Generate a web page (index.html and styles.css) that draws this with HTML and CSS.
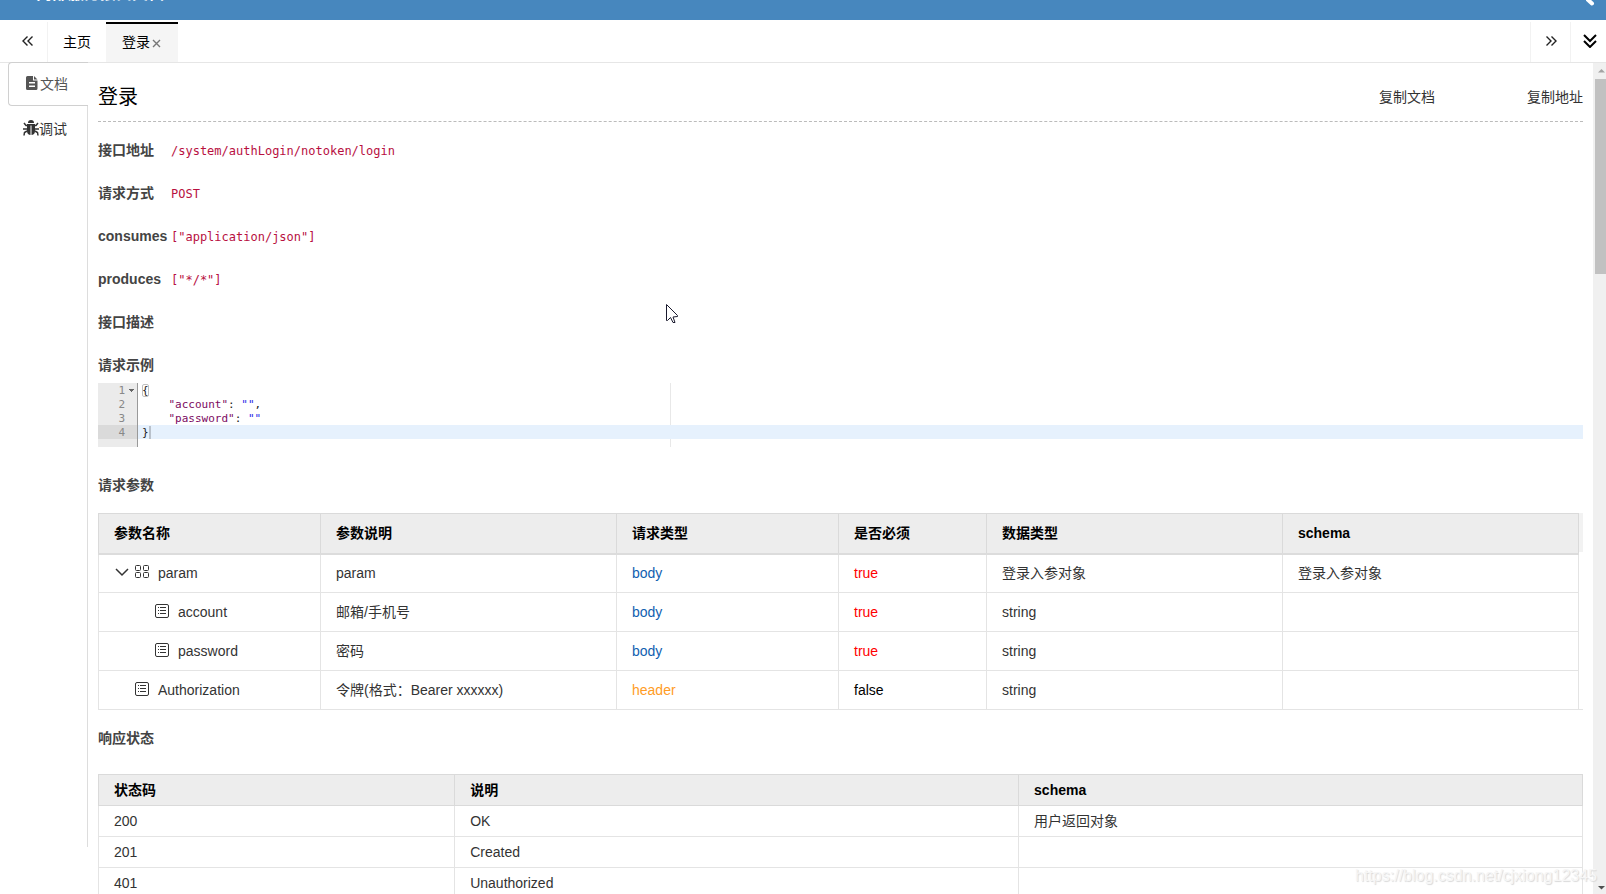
FILE: index.html
```html
<!DOCTYPE html>
<html lang="zh-CN">
<head>
<meta charset="utf-8">
<title>登录</title>
<link rel="stylesheet" href="styles.css">
</head>
<body>
<svg class="defs" aria-hidden="true">
  <symbol id="list" viewBox="0 0 14 14"><rect x="0.5" y="0.5" width="13" height="13" rx="1.5" fill="none" stroke="currentColor"/><path d="M3 3.5h1M5 3.5h6M3 6.5h1M5 6.5h6M3 9.500h1M5 9.500h6" stroke="currentColor" fill="none"/></symbol>
</svg>
<header class="topbar">
  <span class="brand">内部服务接口文档</span>
  <svg class="corner" width="10" height="6" viewBox="0 0 10 6"><path d="M0-2L6 3.500" stroke="#fff" stroke-width="4" stroke-linecap="round"/></svg>
</header>
<nav class="tabs">
  <button class="roll prev" aria-label="向左"><svg width="12" height="12" viewBox="0 0 12 12"><path d="M5.500 1.500L1 6l4.500 4.500M10.500 1.500L6 6l4.500 4.500"/></svg></button>
  <button class="tab">主页</button>
  <button class="tab active">登录<svg class="close" width="9" height="9" viewBox="0 0 9 9"><path d="M1 1l7 7M8 1L1 8"/></svg></button>
  <button class="roll next" aria-label="向右"><svg width="12" height="12" viewBox="0 0 12 12"><path d="M1.500 1.500L6 6l-4.500 4.500M6.500 1.500L11 6l-4.500 4.500"/></svg></button>
  <button class="roll more" aria-label="更多"><svg width="14" height="14" viewBox="0 0 14 14"><path d="M1 1l6 6 6-6M1 7l6 6 6-6"/></svg></button>
</nav>
<div class="body">
  <aside class="side">
    <button class="side-tab active"><svg width="12" height="14" viewBox="0 0 12 14"><path fill="currentColor" fill-rule="evenodd" d="M1.500 0H7v4.500h4.500v8q0 1.500-1.500 1.500h-8.500Q0 14 0 12.500v-11Q0 0 1.500 0zM8 0l3.500 3.500H8zM3 6v1.500h6V6zM3 9.500v1.500h6V9.500z"/></svg>文档</button>
    <button class="side-tab"><svg width="16" height="16" viewBox="0 0 16 16"><path fill="currentColor" d="M5 3a3 3 0 0 1 6 0zM4 4h8v7q0 4-4 4t-4-4z"/><path d="M1 3l2 2.500h10L15 3M0 9h16M4 11l-2.500 1.500L1 15.500M12 11l2.500 1.500.5 3" fill="none" stroke="currentColor" stroke-width="1.500"/><path d="M8 5.500V15" stroke="#fff"/></svg>调试</button>
  </aside>
  <main class="content">
    <div class="title-row">
      <h1>登录</h1>
      <button class="copy">复制文档</button>
      <button class="copy">复制地址</button>
    </div>
    <dl class="info">
      <dt>接口地址</dt><dd>/system/authLogin/notoken/login</dd>
      <dt>请求方式</dt><dd>POST</dd>
      <dt>consumes</dt><dd>["application/json"]</dd>
      <dt>produces</dt><dd>["*/*"]</dd>
      <dt>接口描述</dt><dd></dd>
    </dl>
    <h2 class="example-title">请求示例</h2>
    <div class="editor">
      <div class="line"><span class="no fold">1</span><code><span class="bracket">{</span></code></div>
      <div class="line"><span class="no">2</span><code>    <span class="key">"account"</span>: <span class="str">""</span>,</code></div>
      <div class="line"><span class="no">3</span><code>    <span class="key">"password"</span>: <span class="str">""</span></code></div>
      <div class="line current"><span class="no">4</span><code>}<span class="caret"></span></code></div>
      <div class="line rest"><span class="no"></span></div>
    </div>
    <h2 class="params-title">请求参数</h2>
    <div class="params-box">
      <table class="params">
        <colgroup><col class="w15"><col class="w20"><col class="w15"><col class="w10"><col class="w20"><col class="w20"></colgroup>
        <thead><tr><th>参数名称</th><th>参数说明</th><th>请求类型</th><th>是否必须</th><th>数据类型</th><th>schema</th></tr></thead>
        <tbody>
          <tr><td><span class="name"><svg class="chevron" width="14" height="14" viewBox="0 0 14 14"><path d="M1 4l6 6 6-6"/></svg><svg width="14" height="14" viewBox="0 0 14 14" fill="none" stroke="currentColor"><rect x="0.500" y="0.500" width="5" height="5" rx="1"/><rect x="8.500" y="0.500" width="5" height="5" rx="1"/><rect x="0.500" y="7.500" width="5" height="5" rx="1"/><rect x="8.500" y="7.500" width="5" height="5" rx="1"/></svg><span class="label">param</span></span></td><td>param</td><td class="blue">body</td><td class="red">true</td><td>登录入参对象</td><td>登录入参对象</td></tr>
          <tr><td><span class="name child"><svg width="14" height="14"><use href="#list"/></svg><span class="label">account</span></span></td><td>邮箱/手机号</td><td class="blue">body</td><td class="red">true</td><td>string</td><td></td></tr>
          <tr><td><span class="name child"><svg width="14" height="14"><use href="#list"/></svg><span class="label">password</span></span></td><td>密码</td><td class="blue">body</td><td class="red">true</td><td>string</td><td></td></tr>
          <tr><td><span class="name leaf"><svg width="14" height="14"><use href="#list"/></svg><span class="label">Authorization</span></span></td><td>令牌(格式：Bearer xxxxxx)</td><td class="orange">header</td><td class="black">false</td><td>string</td><td></td></tr>
        </tbody>
      </table>
    </div>
    <h2 class="status-title">响应状态</h2>
    <table class="status">
      <colgroup><col class="w24"><col class="w38"><col class="w38"></colgroup>
      <thead><tr><th>状态码</th><th>说明</th><th>schema</th></tr></thead>
      <tbody>
        <tr><td>200</td><td>OK</td><td>用户返回对象</td></tr>
        <tr><td>201</td><td>Created</td><td></td></tr>
        <tr><td>401</td><td>Unauthorized</td><td></td></tr>
      </tbody>
    </table>
  </main>
  <div class="scrollbar">
    <svg width="9" height="16" viewBox="0 0 9 16"><path d="M1 9.500L4.500 6 8 9.500z" fill="#a3a3a3"/></svg>
    <span class="thumb"></span>
    <svg class="down" width="9" height="16" viewBox="0 0 9 16"><path d="M1 8L4.500 11.500 8 8z" fill="#505050"/></svg>
  </div>
</div>
<svg class="pointer" width="13" height="20" viewBox="0 0 13 20"><path d="M.5.5v16h1l3-3 2.500 5h2l-2-5.500 4.500-.5v-1z" fill="#fff" stroke="#1a1a2e"/></svg>
<span class="watermark">https://blog.csdn.net/cjxiong12345</span>
</body>
</html>
```
FILE: styles.css
```css
* { box-sizing: border-box; }
body {
  margin: 0;
  height: 100vh;
  overflow: hidden;
  display: flex;
  flex-direction: column;
  font: 14px/20px "Liberation Sans", "Noto Sans CJK SC", sans-serif;
  color: #333;
  background: #fff;
}
button {
  border: 0;
  padding: 0;
  background: none;
  font: inherit;
  color: inherit;
  cursor: pointer;
}
.defs { position: absolute; width: 0; height: 0; }
.topbar {
  flex: none;
  height: 20px;
  overflow: hidden;
  background: #4787be;
  color: #fff;
  display: flex;
  justify-content: space-between;
  align-items: flex-start;
  padding: 0 10px 0 36px;
}
.brand { font-size: 16px; font-weight: bold; margin-top: -16px; }
.corner { display: block; }

.tabs {
  flex: none;
  height: 43px;
  padding-top: 2px;
  display: flex;
  border-bottom: 1px solid #e6e6e6;
  color: #000;
}
.tabs svg { fill: none; stroke: #222; stroke-width: 1.4; }
.roll { width: 40px; display: flex; align-items: center; justify-content: center; padding-bottom: 3px; }
.prev { width: 48px; padding-left: 8px; border-right: 1px solid #f2f2f2; }
.next { margin-left: auto; border-left: 1px solid #f2f2f2; }
.more { width: 36px; border-left: 1px solid #f2f2f2; padding-left: 3px; }
.tabs .more svg { stroke: #000; stroke-width: 2; }
.tab { padding: 0 15px; display: flex; align-items: center; }
.tab.active { background: #f5f5f5; border-top: 2px solid #000; padding: 0 17px 2px 16px; }
.tabs .close { margin: 2px 0 0 2px; stroke: #777; }

.body { flex: 1; min-height: 0; display: flex; }
.side {
  flex: none;
  width: 80px;
  margin: -1px 0 47px 8px;
  display: flex;
  flex-direction: column;
}
.side::after { content: ""; flex: 1; border-right: 1px solid #ddd; }
.side-tab {
  height: 46px;
  display: flex;
  align-items: center;
  padding-left: 15px;
  border-right: 1px solid #ddd;
}
.side-tab.active {
  height: 44px;
  gap: 2px;
  padding-left: 17px;
  border: 1px solid #d0d0d0;
  border-right: 0;
  border-radius: 4px 0 0 4px;
  color: #555;
}
.side-tab svg { margin-bottom: 2px; }

.content { flex: 1; min-width: 0; overflow: hidden; padding: 0 10px; }
.title-row {
  display: flex;
  align-items: center;
  gap: 92px;
  height: 59px;
  padding-top: 10px;
  border-bottom: 1px dashed #bbb;
}
h1 { flex: 1; margin: 0; font-size: 20px; font-weight: normal; line-height: 30px; color: #000; }
.info {
  display: grid;
  grid-template-columns: 73px 1fr;
  grid-auto-rows: 20px;
  row-gap: 23px;
  margin: 18px 0 23px;
}
dt, h2 { font-size: 14px; font-weight: bold; line-height: 20px; color: #444; }
dd { margin: 0; font: 12px/22px "DejaVu Sans Mono", monospace; color: #b8103f; }
h2 { margin: 0; }
.example-title { margin-bottom: 8px; }
.params-title { margin: 28px 0 18px; }
.status-title { margin: 18px 0 26px; }

.editor { position: relative; font: 11px/16px "DejaVu Sans Mono", monospace; color: #222; }
.editor::before {
  content: "";
  position: absolute;
  left: 572px;
  top: 0;
  bottom: 0;
  border-left: 1px solid #e8e8e8;
}
.line { position: relative; display: flex; height: 14px; }
.rest { height: 8px; }
.no {
  width: 40px;
  padding-right: 12px;
  text-align: right;
  background: #ebebeb;
  color: #888;
  border-right: 1px solid #999;
}
.fold {
  background: linear-gradient(#666, #666) 31px 6px / 5px 1px no-repeat,
    linear-gradient(#666, #666) 32px 7px / 3px 1px no-repeat,
    linear-gradient(#666, #666) 33px 8px / 1px 1px no-repeat, #ebebeb;
}
.line code { flex: 1; padding-left: 4px; font: inherit; white-space: pre; }
.current { background: #e6f1fd; }
.current .no { background: #dadada; }
.key { color: #7c0a62; }
.str { color: #2a2ae8; }
.bracket { outline: 1px solid #c0c0c0; outline-offset: -1px; border-radius: 2px; }
.caret { border-left: 2px solid #b9c1cb; }

table { width: 100%; table-layout: fixed; border-collapse: collapse; background: #fff; }
th, td { border: 1px solid #e4e4e4; padding: 0 15px; text-align: left; }
th { background: #ededed; border-color: #dadada; font-weight: bold; color: #000; }
.params-box {
  padding-right: 4px;
  background: linear-gradient(#f2f2f2, #f2f2f2) 0 0 / 100% 39px no-repeat;
  box-shadow: inset 0 -1px #e4e4e4;
}
.params th { height: 40px; border-bottom: 2px solid #dcdcdc; }
.params td { height: 39px; }
.status th, .status td { height: 31px; }
.w10 { width: 10%; }
.w15 { width: 15%; }
.w20 { width: 20%; }
.w24 { width: 24%; }
.w38 { width: 38%; }
.name { display: flex; align-items: center; padding-left: 1px; }
.name svg { margin: 0 9px 3px 0; }
.name .chevron { margin-right: 6px; fill: none; stroke: #333; stroke-width: 1.5; }
.leaf { padding-left: 21px; }
.child { padding-left: 41px; }
.blue { color: #1160b0; }
.red { color: #f00; }
.orange { color: #ff9c25; }
.black { color: #000; }

.scrollbar {
  flex: none;
  width: 13px;
  padding-left: 2px;
  display: flex;
  flex-direction: column;
  background: #f0f0f0;
}
.scrollbar svg { display: block; margin-left: 2px; }
.thumb { height: 195px; background: #c1c1c1; }
.down { margin-top: auto; }
.pointer { position: absolute; left: 666px; top: 304px; }
.watermark {
  position: absolute;
  right: 9px;
  bottom: 8px;
  font-size: 16px;
  color: #f6f6f6;
  text-shadow: 1px 1px 1px #d8d8d8;
}
```
